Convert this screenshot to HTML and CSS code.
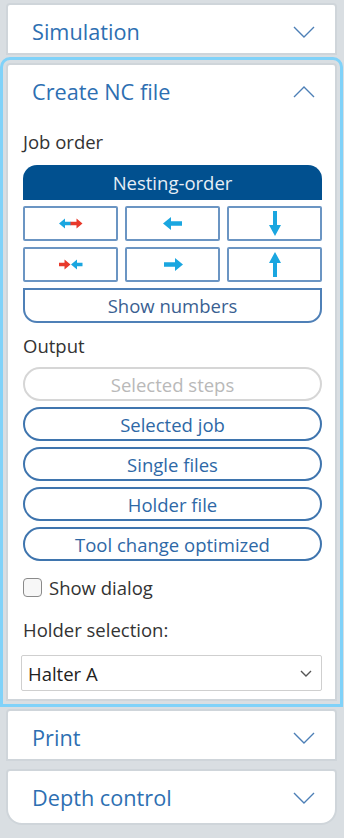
FILE: index.html
```html
<!DOCTYPE html>
<html>
<head>
<meta charset="utf-8">
<link rel="stylesheet" href="styles.css">
</head>
<body>
<div class="panel">
  <section class="card">
    <div class="card-head">
      <span class="title">Simulation</span>
      <svg class="chev" width="22" height="12" viewBox="0 0 22 12"><polyline points="1,1 11,11 21,1"/></svg>
    </div>
  </section>

  <section class="card active">
    <div class="card-head">
      <span class="title">Create NC file</span>
      <svg class="chev" width="22" height="12" viewBox="0 0 22 12"><polyline points="1,11 11,1 21,11"/></svg>
    </div>
    <div class="card-body">
      <div class="label">Job order</div>
      <button class="nest">Nesting-order</button>
      <div class="dir-grid">
        <button class="dir"><svg width="24" height="11" viewBox="0 0 24 11"><path class="cy" d="M0 5.5 L6 0.5 V3.8 H12 V7.2 H6 V10.5 Z"/><path class="rd" d="M23.5 5.5 L17.5 0.5 V3.8 H11.5 V7.2 H17.5 V10.5 Z"/></svg></button>
        <button class="dir"><svg width="20" height="13" viewBox="0 0 20 13"><path class="cy" d="M0 6.5 L8 0 V4.3 H19 V8.7 H8 V13 Z"/></svg></button>
        <button class="dir"><svg width="12" height="25" viewBox="0 0 12 25"><path class="cy" d="M4 0 H8 V14 H12 L6 25 L0 14 H4 Z"/></svg></button>
        <button class="dir"><svg width="24" height="11" viewBox="0 0 24 11"><path class="rd" d="M11.5 5.5 L5.5 0.5 V3.8 H0 V7.2 H5.5 V10.5 Z"/><path class="cy" d="M12 5.5 L18 0.5 V3.8 H23.5 V7.2 H18 V10.5 Z"/></svg></button>
        <button class="dir"><svg width="20" height="13" viewBox="0 0 20 13"><path class="cy" d="M20 6.5 L12 0 V4.3 H1 V8.7 H12 V13 Z"/></svg></button>
        <button class="dir"><svg width="12" height="25" viewBox="0 0 12 25"><path class="cy" d="M4 25 H8 V11 H12 L6 0 L0 11 H4 Z"/></svg></button>
      </div>
      <button class="shownum">Show numbers</button>

      <div class="label out">Output</div>
      <div class="pills">
        <button class="pill disabled">Selected steps</button>
        <button class="pill">Selected job</button>
        <button class="pill">Single files</button>
        <button class="pill">Holder file</button>
        <button class="pill">Tool change optimized</button>
      </div>

      <label class="check"><span class="box"></span>Show dialog</label>

      <div class="label hold">Holder selection:</div>
      <div class="select">
        <span>Halter A</span>
        <svg width="12" height="7" viewBox="0 0 12 7"><polyline points="1,1 6,6 11,1"/></svg>
      </div>
    </div>
  </section>

  <section class="card">
    <div class="card-head">
      <span class="title">Print</span>
      <svg class="chev" width="22" height="12" viewBox="0 0 22 12"><polyline points="1,1 11,11 21,1"/></svg>
    </div>
  </section>

  <section class="card last">
    <div class="card-head">
      <span class="title">Depth control</span>
      <svg class="chev" width="22" height="12" viewBox="0 0 22 12"><polyline points="1,1 11,11 21,1"/></svg>
    </div>
  </section>
</div>
</body>
</html>
```

FILE: styles.css
```css
* { box-sizing: border-box; }
html, body { margin: 0; padding: 0; }
body {
  background: #d9dee2;
  font-family: "Open Sans", "Noto Sans", sans-serif;
  width: 344px;
  height: 838px;
  overflow: hidden;
}
.panel {
  padding: 3px 7px 0 6px;
  display: flex;
  flex-direction: column;
  gap: 8px;
}
.card {
  background: #fff;
  border: 2px solid #cfd5da;
  border-radius: 4px 4px 0 0;
}
.card.active {
  outline: 3px solid #80d2f9;
  outline-offset: 3px;
}
.card.last {
  border-radius: 4px 4px 16px 16px;
  min-height: 56px;
}
.card-head {
  height: 48px;
  display: flex;
  align-items: center;
  justify-content: space-between;
  padding: 5px 20px 0 24px;
}
.title {
  font-size: 21.7px;
  color: #2d6fb2;
}
.chev polyline {
  fill: none;
  stroke: #4d7fb6;
  stroke-width: 1.4;
}
.card-body {
  padding: 17px 13px 8px 15px;
  display: flex;
  flex-direction: column;
}
.label {
  font-size: 18.5px;
  line-height: 24px;
  color: #333;
}
button {
  font-family: inherit;
  margin: 0;
  cursor: pointer;
  padding: 0;
}
.nest {
  margin-top: 11px;
  height: 35px;
  background: #01508f;
  color: #e6eef6;
  border: none;
  border-radius: 14px 14px 0 0;
  font-size: 18.5px;
}
.dir-grid {
  margin-top: 6px;
  display: grid;
  grid-template-columns: 1fr 1fr 1fr;
  gap: 6px 7px;
}
.dir {
  height: 35px;
  background: #fff;
  border: 2px solid #6b95c3;
  border-radius: 2px;
  display: flex;
  align-items: center;
  justify-content: center;
}
.cy { fill: #1aa6e0; }
.rd { fill: #e8392b; }
.shownum {
  margin-top: 6px;
  height: 35px;
  background: #fff;
  border: 2px solid #4f80b7;
  border-radius: 0 0 14px 14px;
  color: #3a5f92;
  font-size: 18.5px;
}
.label.out { margin-top: 11px; }
.pills {
  margin-top: 9px;
  display: flex;
  flex-direction: column;
  gap: 6px;
}
.pill {
  height: 34px;
  background: #fff;
  border: 2px solid #3f75ae;
  border-radius: 17px;
  color: #2e68a6;
  font-size: 18.5px;
}
.pill.disabled {
  border-color: #d6d6d6;
  color: #b9b9b9;
}
.check {
  margin-top: 15px;
  display: flex;
  align-items: center;
  gap: 7px;
  font-size: 18.5px;
  color: #333;
  height: 22px;
}
.box {
  width: 19px;
  height: 19px;
  border: 1.5px solid #8a8a8a;
  border-radius: 4px;
  background: #f7f7f7;
}
.label.hold { margin-top: 20px; }
.select {
  margin-top: 13px;
  margin-left: -2px;
  height: 36px;
  border: 1px solid #cfcfcf;
  border-radius: 2px;
  display: flex;
  align-items: center;
  justify-content: space-between;
  padding: 0 9px 0 6px;
  font-size: 18.5px;
  color: #222;
}
.select polyline {
  fill: none;
  stroke: #555;
  stroke-width: 1.4;
}
```
